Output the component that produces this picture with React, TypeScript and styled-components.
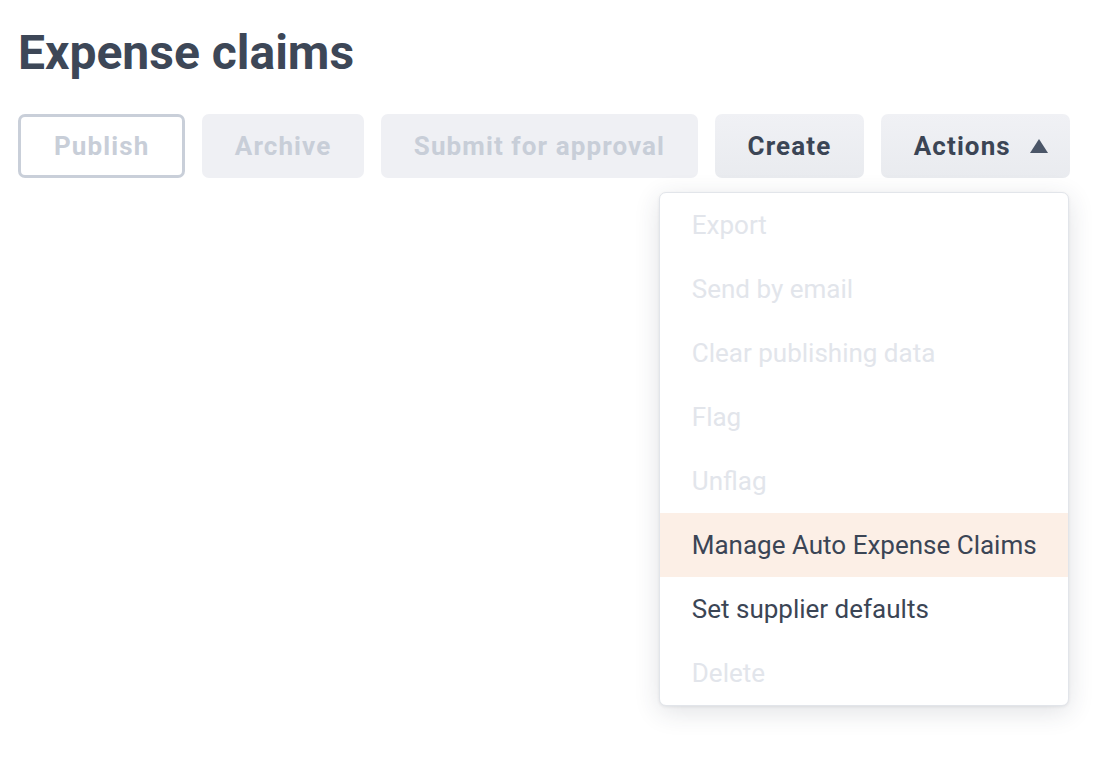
import React from "react";
import styled, { createGlobalStyle } from "styled-components";

const Global = createGlobalStyle`
  html, body { margin: 0; padding: 0; background: #ffffff; }
  body { font-family: Roboto, "Liberation Sans", sans-serif; -webkit-font-smoothing: antialiased; }
`;

const Page = styled.div`
  box-sizing: border-box;
  min-height: 100vh;
  padding: 25px 18px;
  display: flex;
  flex-direction: column;
  gap: 33px;
`;

const Title = styled.h1`
  margin: 0;
  font-size: 48px;
  line-height: 56px;
  font-weight: 700;
  color: #3d4757;
`;

const Toolbar = styled.div`
  display: flex;
  gap: 16.5px;
  align-items: flex-start;
`;

type Variant = "outline" | "disabled" | "normal";

const Button = styled.button<{ $variant: Variant; $caret?: boolean }>`
  box-sizing: border-box;
  height: 64px;
  padding: 0 ${(p) => (p.$caret ? "22px" : "33px")} 0 33px;
  border-radius: 7px;
  font-family: Roboto, "Liberation Sans", sans-serif;
  font-size: 26px;
  font-weight: 700;
  letter-spacing: 1.1px;
  display: flex;
  align-items: center;
  gap: 19px;
  cursor: pointer;
  border: ${(p) => (p.$variant === "outline" ? "3px solid #c9cfd9" : "none")};
  background: ${(p) =>
    p.$variant === "outline"
      ? "#ffffff"
      : p.$variant === "disabled"
      ? "#eff0f4"
      : "linear-gradient(#f0f1f5, #e9ebef)"};
  color: ${(p) => (p.$variant === "normal" ? "#3b4555" : "#c8ced8")};
`;

const ActionsWrap = styled.div`
  position: relative;
`;

const Menu = styled.div`
  position: absolute;
  top: 78px;
  right: 1px;
  width: 410px;
  box-sizing: border-box;
  background: #ffffff;
  border: 1px solid #e2e5ea;
  border-radius: 7px;
  box-shadow: 0 6px 26px rgba(40, 50, 70, 0.14), 0 1px 3px rgba(40, 50, 70, 0.08);
  overflow: hidden;
  display: flex;
  flex-direction: column;
  z-index: 2;
`;

const Item = styled.div<{ $disabled?: boolean; $active?: boolean }>`
  height: 64px;
  flex: none;
  display: flex;
  align-items: center;
  padding: 0 32px;
  font-size: 26px;
  font-weight: 400;
  white-space: nowrap;
  color: ${(p) => (p.$disabled ? "#e2e5eb" : "#3b4555")};
  background: ${(p) => (p.$active ? "#fcefe6" : "transparent")};
`;

const Caret = () => (
  <svg width="18" height="14" viewBox="0 0 18 14">
    <polygon points="9,0 18,14 0,14" fill="#4b5668" />
  </svg>
);

const items: { label: string; disabled?: boolean; active?: boolean }[] = [
  { label: "Export", disabled: true },
  { label: "Send by email", disabled: true },
  { label: "Clear publishing data", disabled: true },
  { label: "Flag", disabled: true },
  { label: "Unflag", disabled: true },
  { label: "Manage Auto Expense Claims", active: true },
  { label: "Set supplier defaults" },
  { label: "Delete", disabled: true },
];

export default function App() {
  return (
    <>
      <Global />
      <Page>
        <Title>Expense claims</Title>
        <Toolbar>
          <Button $variant="outline">Publish</Button>
          <Button $variant="disabled">Archive</Button>
          <Button $variant="disabled">Submit for approval</Button>
          <Button $variant="normal">Create</Button>
          <ActionsWrap>
            <Button $variant="normal" $caret>
              Actions <Caret />
            </Button>
            <Menu>
              {items.map((it) => (
                <Item key={it.label} $disabled={it.disabled} $active={it.active}>
                  {it.label}
                </Item>
              ))}
            </Menu>
          </ActionsWrap>
        </Toolbar>
      </Page>
    </>
  );
}
